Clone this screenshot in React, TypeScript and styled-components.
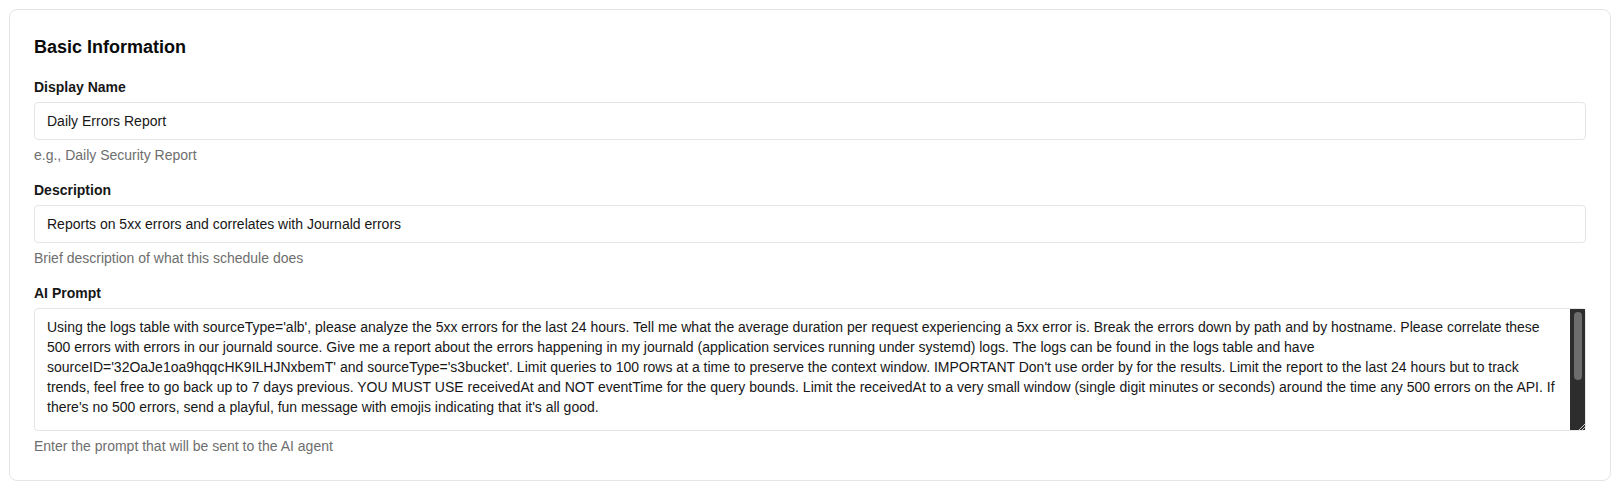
import React from "react";
import styled, { createGlobalStyle } from "styled-components";

const GlobalStyle = createGlobalStyle`
  * { box-sizing: border-box; }
  body {
    margin: 0;
    background: #ffffff;
    font-family: "Liberation Sans", Arial, sans-serif;
    color: #171717;
  }
`;

const Page = styled.div`
  padding: 9px 4px 8px 9px;
`;

const Card = styled.section`
  border: 1px solid #e5e5e5;
  border-radius: 8px;
  background: #ffffff;
  padding: 24px;
  display: flex;
  flex-direction: column;
`;

const Title = styled.h2`
  margin: 0 0 17px;
  font-size: 18px;
  line-height: 26px;
  font-weight: 700;
  color: #0a0a0a;
`;

const Fields = styled.div`
  display: flex;
  flex-direction: column;
  gap: 15px;
`;

const Field = styled.div`
  display: flex;
  flex-direction: column;
`;

const Label = styled.label`
  font-size: 14px;
  line-height: 20px;
  font-weight: 700;
  color: #171717;
  margin-bottom: 5px;
`;

const TextInput = styled.input`
  height: 38px;
  width: 100%;
  padding: 0 12px;
  border: 1px solid #e5e5e5;
  border-radius: 4px;
  font-family: inherit;
  font-size: 14px;
  color: #171717;
  background: #ffffff;
  outline: none;
`;

const PromptWrap = styled.div`
  position: relative;
`;

const PromptArea = styled.textarea`
  height: 123px;
  width: 100%;
  padding: 8px 27px 8px 12px;
  border: 1px solid #e5e5e5;
  border-radius: 4px;
  font-family: inherit;
  font-size: 14px;
  line-height: 20px;
  color: #171717;
  background: #ffffff;
  outline: none;
  resize: vertical;
  display: block;
  scrollbar-width: none;

  &::-webkit-scrollbar {
    width: 0;
  }
  &::-webkit-resizer {
    background-color: #2d2d2d;
    background-image: linear-gradient(
      135deg,
      transparent 0 78%,
      #c8c8c8 78% 82%,
      transparent 82% 88%,
      #c8c8c8 88% 92%,
      transparent 92%
    );
  }
`;

const ScrollTrack = styled.div`
  position: absolute;
  top: 1px;
  right: 1px;
  bottom: 15px;
  width: 15px;
  background: #2d2d2d;
  padding: 3px 3px 0 4px;
  pointer-events: none;
`;

const ScrollThumb = styled.div`
  height: 68px;
  border-radius: 4px;
  background: #6d6d6d;
`;

const ResizeCorner = styled.div`
  position: absolute;
  right: 1px;
  bottom: 1px;
  width: 15px;
  height: 14px;
  background-color: #2d2d2d;
  background-image: linear-gradient(
    135deg,
    transparent 0 76%,
    #cfcfcf 76% 81%,
    transparent 81% 87%,
    #cfcfcf 87% 92%,
    transparent 92%
  );
  pointer-events: none;
`;

const Hint = styled.p`
  margin: 5px 0 0;
  font-size: 14px;
  line-height: 20px;
  color: #6e6e6e;
`;

const promptText =
  "Using the logs table with sourceType='alb', please analyze the 5xx errors for the last 24 hours. Tell me what the average duration per request experiencing a 5xx error is. Break the errors down by path and by hostname. Please correlate these 500 errors with errors in our journald source. Give me a report about the errors happening in my journald (application services running under systemd) logs. The logs can be found in the logs table and have sourceID='32OaJe1oa9hqqcHK9ILHJNxbemT' and sourceType='s3bucket'. Limit queries to 100 rows at a time to preserve the context window. IMPORTANT Don't use order by for the results. Limit the report to the last 24 hours but to track trends, feel free to go back up to 7 days previous. YOU MUST USE receivedAt and NOT eventTime for the query bounds. Limit the receivedAt to a very small window (single digit minutes or seconds) around the time any 500 errors on the API. If there's no 500 errors, send a playful, fun message with emojis indicating that it's all good.";

export default function App() {
  return (
    <>
      <GlobalStyle />
      <Page>
        <Card>
          <Title>Basic Information</Title>
          <Fields>
            <Field>
              <Label htmlFor="displayName">Display Name</Label>
              <TextInput id="displayName" defaultValue="Daily Errors Report" />
              <Hint>e.g., Daily Security Report</Hint>
            </Field>
            <Field>
              <Label htmlFor="description">Description</Label>
              <TextInput
                id="description"
                defaultValue="Reports on 5xx errors and correlates with Journald errors"
              />
              <Hint>Brief description of what this schedule does</Hint>
            </Field>
            <Field>
              <Label htmlFor="prompt">AI Prompt</Label>
              <PromptWrap>
                <PromptArea id="prompt" defaultValue={promptText} />
                <ScrollTrack>
                  <ScrollThumb />
                </ScrollTrack>
                <ResizeCorner />
              </PromptWrap>
              <Hint>Enter the prompt that will be sent to the AI agent</Hint>
            </Field>
          </Fields>
        </Card>
      </Page>
    </>
  );
}
